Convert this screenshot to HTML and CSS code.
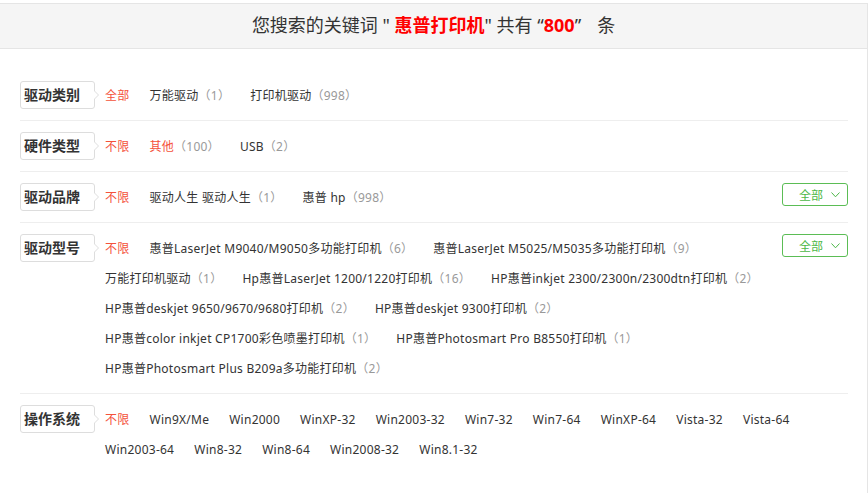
FILE: index.html
```html
<!DOCTYPE html>
<html lang="zh-CN">
<head>
    <meta charset="UTF-8">
    <title>驱动搜索 - 惠普打印机</title>
    <link rel="stylesheet" href="styles.css">
</head>
<body>
    <div class="page">
        <div class="search-head">
            您搜索的关键词 " <b class="kw">惠普打印机</b>" 共有 “<b class="num">800</b>”<span class="unit">条</span>
        </div>

        <div class="filter">
            <div class="filter-row">
                <span class="filter-label">驱动类别</span>
                <ul class="filter-items">
                    <li class="on">全部</li>
                    <li>万能驱动<em>（1）</em></li>
                    <li>打印机驱动<em>（998）</em></li>
                </ul>
            </div>

            <div class="filter-row">
                <span class="filter-label">硬件类型</span>
                <ul class="filter-items">
                    <li class="on">不限</li>
                    <li class="on">其他<em>（100）</em></li>
                    <li>USB<em>（2）</em></li>
                </ul>
            </div>

            <div class="filter-row">
                <span class="filter-label">驱动品牌</span>
                <ul class="filter-items">
                    <li class="on">不限</li>
                    <li>驱动人生 驱动人生<em>（1）</em></li>
                    <li>惠普 hp<em>（998）</em></li>
                </ul>
                <a class="more" href="#">全部<svg width="9" height="6" viewBox="0 0 9 6"><path d="M0.5 0.5L4.5 4.8L8.5 0.5" fill="none" stroke="#4db848" stroke-width="1"/></svg></a>
            </div>

            <div class="filter-row">
                <span class="filter-label">驱动型号</span>
                <ul class="filter-items">
                    <li class="on">不限</li>
                    <li>惠普LaserJet M9040/M9050多功能打印机<em>（6）</em></li>
                    <li>惠普LaserJet M5025/M5035多功能打印机<em>（9）</em></li>
                    <li>万能打印机驱动<em>（1）</em></li>
                    <li>Hp惠普LaserJet 1200/1220打印机<em>（16）</em></li>
                    <li>HP惠普inkjet 2300/2300n/2300dtn打印机<em>（2）</em></li>
                    <li>HP惠普deskjet 9650/9670/9680打印机<em>（2）</em></li>
                    <li>HP惠普deskjet 9300打印机<em>（2）</em></li>
                    <li>HP惠普color inkjet CP1700彩色喷墨打印机<em>（1）</em></li>
                    <li>HP惠普Photosmart Pro B8550打印机<em>（1）</em></li>
                    <li>HP惠普Photosmart Plus B209a多功能打印机<em>（2）</em></li>
                </ul>
                <a class="more" href="#">全部<svg width="9" height="6" viewBox="0 0 9 6"><path d="M0.5 0.5L4.5 4.8L8.5 0.5" fill="none" stroke="#4db848" stroke-width="1"/></svg></a>
            </div>

            <div class="filter-row">
                <span class="filter-label">操作系统</span>
                <ul class="filter-items">
                    <li class="on">不限</li>
                    <li>Win9X/Me</li>
                    <li>Win2000</li>
                    <li>WinXP-32</li>
                    <li>Win2003-32</li>
                    <li>Win7-32</li>
                    <li>Win7-64</li>
                    <li>WinXP-64</li>
                    <li>Vista-32</li>
                    <li>Vista-64</li>
                    <li>Win2003-64</li>
                    <li>Win8-32</li>
                    <li>Win8-64</li>
                    <li>Win2008-32</li>
                    <li>Win8.1-32</li>
                </ul>
            </div>
        </div>
    </div>
</body>
</html>
```

FILE: styles.css
```css
body {
    margin: 0;
    padding-top: 3px;
    font-family: "Noto Sans", "Noto Sans CJK SC", sans-serif;
    color: #333;
    background: #fff;
}
.page {
    width: 868px;
    min-height: 490px;
    box-sizing: border-box;
    border-right: 1px solid #e5e5e5;
}
.search-head {
    height: 44px;
    line-height: 43px;
    background: #f5f5f5;
    border-top: 1px solid #e5e5e5;
    border-bottom: 1px solid #e5e5e5;
    text-align: center;
    font-size: 18px;
    color: #333;
}
.search-head .kw,
.search-head .num {
    color: #f00;
}
.search-head .unit {
    margin-left: 16px;
}
.filter {
    margin: 21px 19px 0 20px;
}
.filter-row {
    display: flex;
    align-items: flex-start;
    padding: 10px 0;
    border-bottom: 1px solid #eee;
}
.filter-row:last-child {
    border-bottom: none;
}
.filter-label {
    flex: none;
    position: relative;
    width: 75px;
    height: 28px;
    box-sizing: border-box;
    margin: 1px 10px 0 0;
    padding-left: 3px;
    border: 1px solid #ddd;
    border-radius: 3px;
    font-size: 14px;
    font-weight: bold;
    line-height: 26px;
    color: #333;
}
.filter-label::before,
.filter-label::after {
    content: "";
    position: absolute;
    top: 8px;
    border: 5px solid transparent;
    border-right: none;
}
.filter-label::before {
    right: -5px;
    border-left-color: #ddd;
}
.filter-label::after {
    right: -4px;
    border-left-color: #fff;
}
.filter-items {
    flex: 1;
    display: flex;
    flex-wrap: wrap;
    column-gap: 20px;
    margin: 0;
    padding: 0;
    list-style: none;
    font-size: 12px;
    line-height: 31px;
    letter-spacing: 0.25px;
}
.filter-items li {
    height: 30px;
    color: #333;
    white-space: nowrap;
}
.filter-items li.on {
    color: #f4523b;
}
.filter-items em {
    font-style: normal;
    color: #999;
}
.more {
    flex: none;
    display: flex;
    align-items: center;
    width: 66px;
    height: 23px;
    box-sizing: border-box;
    margin-top: 1px;
    padding-left: 16px;
    border: 1px solid #5bbd55;
    border-radius: 3px;
    font-size: 12px;
    color: #4db848;
    text-decoration: none;
}
.more svg {
    margin-left: 8px;
}
```
